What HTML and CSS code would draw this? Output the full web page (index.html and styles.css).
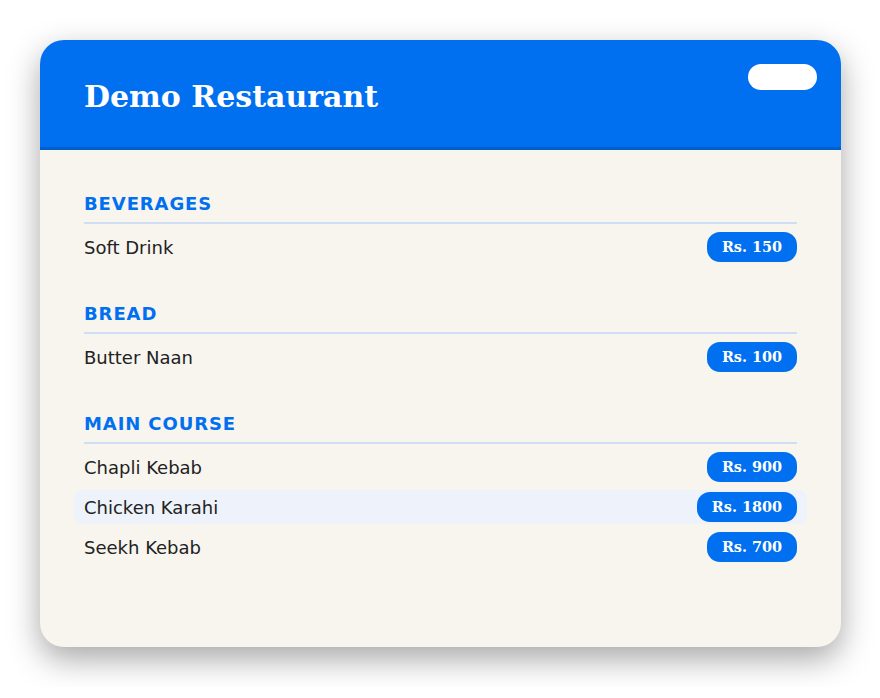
FILE: index.html
```html
<!DOCTYPE html>
<html>
<head>
<meta charset="utf-8">
<link rel="stylesheet" href="styles.css">
</head>
<body>
<div class="card">
  <header class="head">
    <h1 class="title">Demo Restaurant</h1>
    <button class="toggle" aria-label="toggle"></button>
  </header>
  <main class="menu">
    <section class="section">
      <h2 class="cat">BEVERAGES</h2>
      <div class="rows">
        <div class="row"><span class="name">Soft Drink</span><span class="price">Rs. 150</span></div>
      </div>
    </section>
    <section class="section">
      <h2 class="cat">BREAD</h2>
      <div class="rows">
        <div class="row"><span class="name">Butter Naan</span><span class="price">Rs. 100</span></div>
      </div>
    </section>
    <section class="section">
      <h2 class="cat">MAIN COURSE</h2>
      <div class="rows">
        <div class="row"><span class="name">Chapli Kebab</span><span class="price">Rs. 900</span></div>
        <div class="row row-hover"><span class="name">Chicken Karahi</span><span class="price">Rs. 1800</span></div>
        <div class="row"><span class="name">Seekh Kebab</span><span class="price">Rs. 700</span></div>
      </div>
    </section>
  </main>
</div>
</body>
</html>
```
FILE: styles.css
```css
* { box-sizing: border-box; }
html, body { margin: 0; padding: 0; background: #ffffff; }
body { padding: 40px 39px 40px 40px; font-family: "DejaVu Sans", sans-serif; }
.card {
  position: relative;
  width: 801px;
  height: 607px;
  background: #f8f5ef;
  border-radius: 24px;
  overflow: hidden;
  box-shadow: 0 12px 32px rgba(0, 0, 0, 0.35);
}
.head {
  background: #0070f0;
  border-bottom: 3px solid #005fcc;
  padding: 39px 44px 33px;
}
.title {
  margin: 0;
  font-family: "DejaVu Serif", serif;
  font-weight: bold;
  font-size: 30px;
  line-height: 35px;
  color: #ffffff;
}
.toggle {
  position: absolute;
  top: 24px;
  right: 24px;
  width: 69px;
  height: 26px;
  border: 0;
  padding: 0;
  border-radius: 13px;
  background: #ffffff;
}
.menu { padding: 43px 44px 0; display: flex; flex-direction: column; gap: 39px; }
.cat {
  margin: 0 0 6px;
  padding-bottom: 8px;
  border-bottom: 2px solid #d0def5;
  font-size: 18px;
  font-weight: bold;
  line-height: normal;
  color: #0070f0;
  letter-spacing: 0.9px;
}
.rows { display: flex; flex-direction: column; gap: 6px; }
.row {
  display: flex;
  align-items: center;
  justify-content: space-between;
  margin: 0 -10px;
  padding: 2px 10px;
  border-radius: 8px;
}
.row-hover { background: #edf2fb; }
.name { font-size: 18px; color: #222222; }
.price {
  background: #0070f0;
  color: #ffffff;
  font-family: "DejaVu Serif", serif;
  font-weight: bold;
  font-size: 14.4px;
  line-height: 16px;
  padding: 7px 15px;
  border-radius: 13px;
}
```
